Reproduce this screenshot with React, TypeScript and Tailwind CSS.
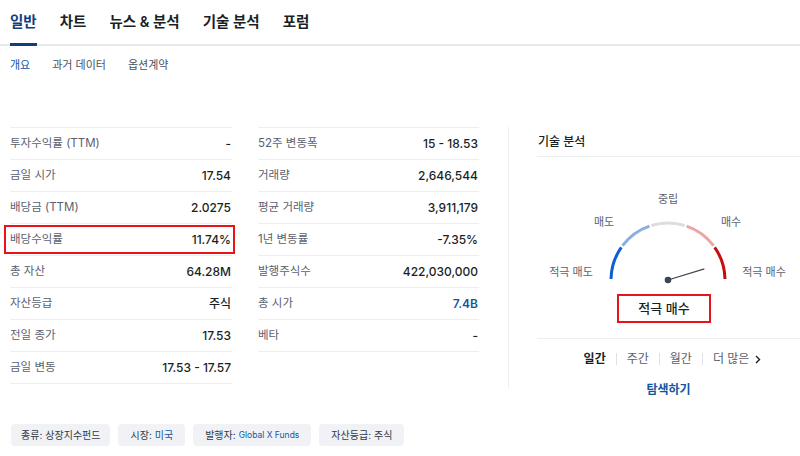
import React from "react";

type Row = { label: string; value: string; blue?: boolean; marked?: boolean };

const tabs = ["일반", "차트", "뉴스 & 분석", "기술 분석", "포럼"];
const subTabs = ["개요", "과거 데이터", "옵션계약"];

const leftRows: Row[] = [
  { label: "투자수익률 (TTM)", value: "-" },
  { label: "금일 시가", value: "17.54" },
  { label: "배당금 (TTM)", value: "2.0275" },
  { label: "배당수익률", value: "11.74%", marked: true },
  { label: "총 자산", value: "64.28M" },
  { label: "자산등급", value: "주식" },
  { label: "전일 종가", value: "17.53" },
  { label: "금일 변동", value: "17.53 - 17.57" },
];

const middleRows: Row[] = [
  { label: "52주 변동폭", value: "15 - 18.53" },
  { label: "거래량", value: "2,646,544" },
  { label: "평균 거래량", value: "3,911,179" },
  { label: "1년 변동률", value: "-7.35%" },
  { label: "발행주식수", value: "422,030,000" },
  { label: "총 시가", value: "7.4B", blue: true },
  { label: "베타", value: "-" },
];

const segments = [
  { from: 180, to: 144, color: "#0b5fd3" },
  { from: 144, to: 108, color: "#8aaee2" },
  { from: 108, to: 72, color: "#dcdcdc" },
  { from: 72, to: 36, color: "#eba5a2" },
  { from: 36, to: 0, color: "#c70d0d" },
];

const cx = 131;
const cy = 123;
const radius = 57;

function point(angle: number, r = radius) {
  const rad = (angle * Math.PI) / 180;
  return [cx + r * Math.cos(rad), cy - r * Math.sin(rad)];
}

function arcPath(from: number, to: number) {
  const [x1, y1] = point(from);
  const [x2, y2] = point(to);
  return `M ${x1.toFixed(2)} ${y1.toFixed(2)} A ${radius} ${radius} 0 0 1 ${x2.toFixed(2)} ${y2.toFixed(2)}`;
}

export default function App() {
  const [nx, ny] = point(17, 38);

  return (
    <div className="h-[456px] w-[800px] overflow-hidden bg-white font-['Inter','Noto_Sans_CJK_KR',sans-serif] text-[#1b1f24]">
      <nav className="flex h-[46px] gap-[23px] border-b-2 border-[#e6e9ee] px-[10px] pt-[12px]">
        {tabs.map((tab, i) => (
          <div
            key={tab}
            className={
              "relative whitespace-nowrap text-[14.5px] font-semibold leading-[20px] " +
              (i === 0 ? "text-[#0e3f7e]" : "text-[#1b1f24]")
            }
          >
            {tab}
            {i === 0 ? (
              <span className="absolute bottom-[-2px] left-0 h-[3px] w-full bg-[#0e3f7e]" />
            ) : null}
          </div>
        ))}
      </nav>

      <div className="mt-[11px] flex gap-[22px] px-[10px] text-[11px] leading-[16px]">
        {subTabs.map((item, i) => (
          <span key={item} className={i === 0 ? "text-[#1256a0]" : "text-[#4b515c]"}>
            {item}
          </span>
        ))}
      </div>

      <div className="mt-[54px] flex pl-[10px]">
        <StatTable rows={leftRows} width="w-[222px]" />
        <div className="ml-[26px]">
          <StatTable rows={middleRows} width="w-[221px]" />
        </div>

        <section className="ml-[29px] h-[261px] w-[292px] border-l border-[#eceef1] pl-[28px]">
          <div className="flex h-[30px] items-center border-b border-[#eceef1] pl-[1px] text-[12px] font-medium">
            기술 분석
          </div>

          <svg width="264" height="133" viewBox="0 0 264 133" className="block">
            {segments.map((s) => (
              <path
                key={s.color}
                d={arcPath(s.from - 1, s.to + 1)}
                fill="none"
                stroke={s.color}
                strokeWidth="3"
              />
            ))}
            <line x1={cx} y1={cy} x2={nx} y2={ny} stroke="#3d4452" strokeWidth="1.2" />
            <circle cx={cx} cy={cy} r="3.3" fill="#3d4452" />
            <g fontSize="11" fill="#5b616e" textAnchor="middle" dominantBaseline="middle">
              <text x="131" y="43">중립</text>
              <text x="67" y="66">매도</text>
              <text x="194" y="66">매수</text>
              <text x="34" y="116">적극 매도</text>
              <text x="227" y="116">적극 매수</text>
            </g>
          </svg>

          <div className="ml-[80px] mt-[4px] flex h-[29px] w-[94px] items-center justify-center border-2 border-[#e8141b] text-[13px] font-medium">
            적극 매수
          </div>

          <div className="mt-[15px] border-t border-[#eceef1]" />

          <div className="mt-[10px] flex h-[20px] items-center justify-center gap-[10px] pl-[8px] text-[12px] text-[#5b616e]">
            <span className="font-semibold text-[#1b1f24]">일간</span>
            <span className="h-[12px] w-px bg-[#dde0e5]" />
            <span>주간</span>
            <span className="h-[12px] w-px bg-[#dde0e5]" />
            <span>월간</span>
            <span className="h-[12px] w-px bg-[#dde0e5]" />
            <span className="flex items-center gap-[6px]">
              더 많은
              <svg width="6" height="9" viewBox="0 0 6 9">
                <path d="M1 1l3.5 3.5L1 8" fill="none" stroke="#1b1f24" strokeWidth="1.4" />
              </svg>
            </span>
          </div>

          <div className="mt-[13px] text-center text-[12px] font-semibold leading-[16px] text-[#1256a0]">
            탐색하기
          </div>
        </section>
      </div>

      <div className="mt-[36px] flex gap-[8px] px-[11px] text-[10px] text-[#333a45]">
        <Tag label="종류:" value="상장지수펀드" narrow />
        <Tag label="시장:" value="미국" blue />
        <Tag label="발행자:" value="Global X Funds" blue latin />
        <Tag label="자산등급:" value="주식" />
      </div>
    </div>
  );
}

function StatTable({ rows, width }: { rows: Row[]; width: string }) {
  return (
    <div className={width + " border-t border-[#eceef1]"}>
      {rows.map((row) => (
        <div
          key={row.label}
          className="relative flex h-[32px] items-center justify-between border-b border-[#eceef1] pr-[1px] text-[12px]"
        >
          <span className="text-[11.5px] text-[#5b616e]">{row.label}</span>
          <span className={row.blue ? "font-semibold text-[#1256a0]" : "font-medium text-[#1b1f24]"}>
            {row.value}
          </span>
          {row.marked ? (
            <span className="absolute inset-y-[1px] left-[-6px] right-[-3px] border-2 border-[#e8141b]" />
          ) : null}
        </div>
      ))}
    </div>
  );
}

function Tag({
  label,
  value,
  blue,
  latin,
  narrow,
}: {
  label: string;
  value: string;
  blue?: boolean;
  latin?: boolean;
  narrow?: boolean;
}) {
  return (
    <div
      className={
        "flex h-[22px] items-center gap-[3px] rounded-[4px] bg-[#f0f2f5] " +
        (narrow ? "px-[10px]" : "px-[12px]")
      }
    >
      <span>{label}</span>
      <span className={(blue ? "text-[#1256a0]" : "") + (latin ? " text-[8.5px]" : "")}>{value}</span>
    </div>
  );
}
